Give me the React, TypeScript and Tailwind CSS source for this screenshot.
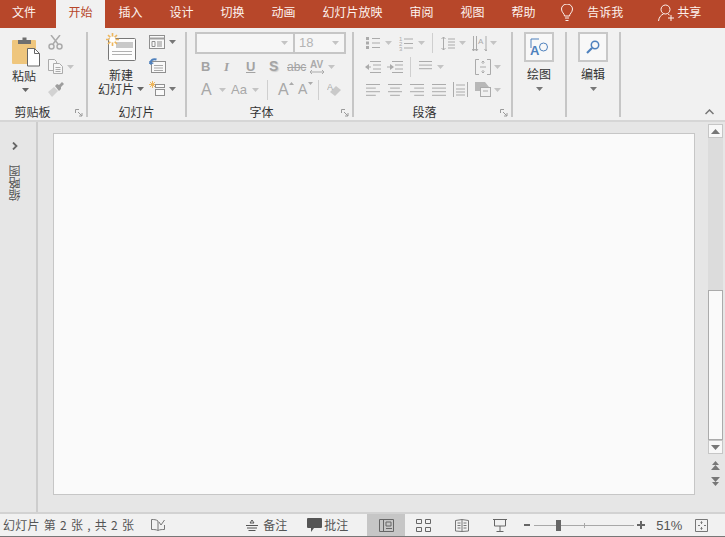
import type { ReactNode } from "react";

const GREY = "#ababab";
const BLUE = "#4f81bd";

function Caret({ className = "", color = "#a8a8a8" }: { className?: string; color?: string }) {
  return (
    <svg width="7" height="4" viewBox="0 0 7 4" className={"shrink-0 " + className}>
      <path d="M0 0h7L3.500 4z" fill={color} />
    </svg>
  );
}

function Launcher({ className = "" }: { className?: string }) {
  return (
    <svg width="8" height="8" viewBox="0 0 8 8" className={"shrink-0 " + className} fill="none" stroke="#9a9a9a">
      <path d="M.5 4V.5H4" />
      <path d="M3 3l4 4M7 4v3H4" />
    </svg>
  );
}

function Lines({ w = 14, rows = [1, 1, 1, 1], align = "left" }: { w?: number; rows?: number[]; align?: "left" | "center" | "right" }) {
  return (
    <svg width={w} height="12" viewBox={`0 0 ${w} 12`} fill="none" stroke={GREY} className="shrink-0">
      {rows.map((r, i) => {
        const len = w * r;
        const x = align === "left" ? 0 : align === "right" ? w - len : (w - len) / 2;
        return <path key={i} d={`M${x} ${i * 3.6 + 0.5}h${len}`} />;
      })}
    </svg>
  );
}

function PasteIcon() {
  return (
    <svg width="29" height="31" viewBox="0 0 29 31" className="shrink-0">
      <rect x="0" y="4" width="24" height="24" rx="1" fill="#efc67d" />
      <path d="M6 8V4h4.500V1.500h4V4H19v4z" fill="#6f6f6f" />
      <path d="M15.500 12.500h7l5 5v12.500h-12z" fill="#fff" stroke="#666" />
      <path d="M22.500 12.500v5h5" fill="none" stroke="#666" />
    </svg>
  );
}

function NewSlideIcon() {
  return (
    <svg width="30" height="29" viewBox="0 0 30 29" className="shrink-0">
      <rect x="2.500" y="5.500" width="27" height="22" rx="1" fill="#fdfdfd" stroke="#777" />
      <rect x="10" y="9" width="17" height="6" fill="#c9c9c9" />
      <path d="M6 18.500h20M6 21.500h20" stroke="#b0b0b0" />
      <g stroke="#eeb65c" strokeWidth="1.600">
        <path d="M6.500 0v13M0 6.500h13M2 2l9 9M11 2l-9 9" />
      </g>
      <circle cx="6.500" cy="6.500" r="3" fill="#fff" />
    </svg>
  );
}

function Row({ children, className = "" }: { children: ReactNode; className?: string }) {
  return <div className={"flex items-center h-[23px] " + className}>{children}</div>;
}

function Group({ w, label, labelClass = "", launcher, children }: { w: string; label?: string; labelClass?: string; launcher?: boolean; children: ReactNode }) {
  return (
    <div className={"relative flex flex-col shrink-0 h-[85px] border-r-2 border-[#c6c6c6] " + w}>
      <div className="flex-1 min-h-0">{children}</div>
      {label && <div className={"text-center text-[12px] leading-[14px] -mb-[2px] text-[#333] " + labelClass}>{label}</div>}
      {launcher && <Launcher className="absolute right-[3px] bottom-0" />}
    </div>
  );
}

function BigButton({ label, icon }: { label: string; icon: ReactNode }) {
  return (
    <div className="flex flex-col items-center w-[30px] ml-[11px]">
      <div className="w-[30px] h-[30px] shrink-0 border-2 border-[#c8c8c8] bg-[#f8f8f8] flex items-center justify-center">{icon}</div>
      <div className="mt-[4px] text-[12px] leading-[16px] text-[#333] whitespace-nowrap">{label}</div>
      <Caret className="mt-[5px]" color="#777" />
    </div>
  );
}

const tabs = ["插入", "设计", "切换", "动画", "幻灯片放映", "审阅", "视图", "帮助"];
const SANS = { fontFamily: '"Liberation Sans", sans-serif' };

export default function App() {
  return (
    <div
      className="w-[725px] h-[537px] overflow-hidden flex flex-col bg-[#f1f1f1] text-[#444]"
      style={{ fontFamily: '"Noto Sans CJK SC", "Liberation Sans", sans-serif' }}
    >
      {/* tab bar */}
      <div className="h-[28px] shrink-0 bg-[#b7472a] flex text-[12px] leading-[24px] text-[#fdf3ef]">
        <div className="w-[56px] pl-[12px]">文件</div>
        <div className="w-[49px] text-center bg-[#f1f1f1] text-[#b7472a]">开始</div>
        {tabs.map((t) => (
          <div key={t} className="px-[13.500px]">
            {t}
          </div>
        ))}
        <svg width="14" height="18" viewBox="0 0 14 18" fill="none" stroke="#fdf3ef" className="ml-[11px] mt-[4px] shrink-0">
          <path d="M4.500 12c0-2.500-3-3.500-3-7a5.500 5 0 0 1 11 0c0 3.500-3 4.500-3 7z" />
          <path d="M5 14h4M5.500 16.500h3" />
        </svg>
        <div className="ml-[13px]">告诉我</div>
        <svg width="17" height="18" viewBox="0 0 17 18" fill="none" stroke="#fdf3ef" className="ml-[35px] mt-[4px] shrink-0">
          <circle cx="7.500" cy="5.500" r="4.500" />
          <path d="M.5 17c.5-4 2.500-6 5-7M10 10l1.500 1M13 11v6M10 14h6" />
        </svg>
        <div className="ml-[2px]">共享</div>
      </div>

      {/* ribbon */}
      <div className="relative h-[94px] shrink-0 pt-[4px] flex border-b-2 border-[#d6d6d6]">
        <Group w="w-[88px]" label="剪贴板" labelClass="pr-[21px]" launcher>
          <div className="flex">
            <div className="ml-[12px] w-[28px] flex flex-col items-start">
              <div className="mt-[4px]"><PasteIcon /></div>
              <div className="mt-[1px] text-[12px] leading-[16px] text-[#333]">粘贴</div>
              <Caret className="mt-[4px] ml-[10px]" color="#666" />
            </div>
            <div className="ml-[8px] flex flex-col">
              <svg width="15" height="15" viewBox="0 0 15 15" fill="none" stroke={GREY} strokeWidth="1.500" className="mt-[3px]">
                <path d="M3 0l7 9M12 0L5 9" />
                <circle cx="3.500" cy="11.500" r="2.500" />
                <circle cx="11.500" cy="11.500" r="2.500" />
              </svg>
              <div className="mt-[9px] flex items-center">
                <svg width="15" height="15" viewBox="0 0 15 15" fill="#f6f6f6" stroke={GREY}>
                  <path d="M.5.5h6l2 2v9h-8z" />
                  <path d="M5.500 4.500h6l3 3v7h-9z" />
                  <path d="M7.500 8.500h5M7.500 10.500h5M7.500 12.500h5" />
                </svg>
                <Caret className="ml-[4px]" color="#c4c4c4" />
              </div>
              <svg width="16" height="15" viewBox="0 0 16 15" className="mt-[8px]">
                <path d="M0 10l6-5 4 4-6 6z" fill="#d2d2d2" />
                <path d="M7 4l2-2 2 1 3-3 2 2-3 3 0 2-2 2z" fill="#9d9d9d" />
              </svg>
            </div>
          </div>
        </Group>

        <Group w="w-[99px]" label="幻灯片">
          <div className="flex">
            <div className="ml-[10px] w-[48px] flex flex-col items-start">
              <div className="mt-[1px] ml-[8px]"><NewSlideIcon /></div>
              <div className="mt-[6px] ml-[11px] text-[12px] leading-[14px] text-[#333]">新建</div>
              <div className="flex items-center text-[12px] leading-[14px] text-[#333] whitespace-nowrap">
                幻灯片
                <Caret className="ml-[3px]" color="#666" />
              </div>
            </div>
            <div className="ml-[3px] flex flex-col">
              <div className="mt-[3px] flex items-center">
                <svg width="16" height="14" viewBox="0 0 16 14" fill="none" stroke="#8f8f8f">
                  <rect x=".5" y=".5" width="15" height="13" fill="#f9f9f9" />
                  <path d="M.5 3.500h15" stroke="#a0a0a0" strokeWidth="2" />
                  <path d="M3 6.500h3v5H3z M8 7h5M8 9h5M8 11h5" />
                </svg>
                <Caret className="ml-[4px]" color="#777" />
              </div>
              <svg width="17" height="15" viewBox="0 0 17 15" fill="none" className="mt-[9px]">
                <rect x="2.500" y="3.500" width="14" height="11" stroke="#8f8f8f" fill="#f9f9f9" />
                <path d="M5 7.500h9M5 10h9M5 12.500h9" stroke="#a8a8a8" />
                <path d="M7.500 1.500C4 .5 1.500 2 1 6" stroke={BLUE} strokeWidth="2" />
                <path d="M0 3l1.500 4L5 5z" fill={BLUE} />
              </svg>
              <div className="mt-[8px] flex items-center">
                <svg width="16" height="15" viewBox="0 0 16 15" fill="none">
                  <g stroke="#eeb65c"><path d="M3.500 0v7M0 3.500h7M1 1l5 5M6 1L1 6" /></g>
                  <rect x="6.500" y="3.500" width="9" height="3" stroke="#8f8f8f" fill="#f9f9f9" />
                  <rect x="6.500" y="8.500" width="9" height="6" stroke="#8f8f8f" fill="#f9f9f9" />
                </svg>
                <Caret className="ml-[4px]" color="#777" />
              </div>
            </div>
          </div>
        </Group>

        <Group w="w-[167px]" label="字体" labelClass="pr-[16px]" launcher>
          <div className="flex ml-[8px]">
            <div className="w-[100px] h-[22px] border-2 border-[#c6c6c6] bg-[#f6f6f6] flex items-center justify-end pr-[5px]"><Caret color="#c4c4c4" /></div>
            <div className="w-[51px] h-[22px] border-2 border-l-0 border-[#c6c6c6] bg-[#f6f6f6] flex items-center justify-between pl-[4px] pr-[5px] text-[13px] text-[#b4b4b4]" style={SANS}>18<Caret color="#c4c4c4" /></div>
          </div>
          <Row className="ml-[14px] text-[#a3a3a3] text-[13px] font-bold mt-[1px]">
            <span className="w-[23px]" style={SANS}>B</span>
            <span className="w-[22px] italic" style={{ fontFamily: '"Liberation Serif", serif' }}>I</span>
            <span className="w-[23px] underline" style={SANS}>U</span>
            <span className="w-[18px] text-[14px]" style={{ ...SANS, textShadow: "1px 1px 1px #ccc" }}>S</span>
            <span className="w-[22px] line-through font-normal text-[12px] text-[#a3a3a3]" style={SANS}>abc</span>
            <svg width="16" height="16" viewBox="0 0 16 16" className="shrink-0" fill="none" stroke={GREY}>
              <text x="1" y="9" fontSize="10" fill={GREY} stroke="none" fontFamily="Liberation Sans">AV</text>
              <path d="M1 13h14M3 11l-2 2 2 2M13 11l2 2-2 2" />
            </svg>
            <Caret className="ml-[3px]" color="#c4c4c4" />
          </Row>
          <Row className="ml-[14px] text-[#a8a8a8]">
            <span className="text-[16px] w-[17px] leading-none" style={SANS}>A</span>
            <Caret color="#c4c4c4" className="ml-[1px]" />
            <span className="text-[13px] ml-[5px] w-[21px]" style={SANS}>Aa</span>
            <Caret color="#c4c4c4" />
            <div className="ml-[8px] w-px h-[20px] bg-[#cfcfcf]" />
            <span className="text-[16px] ml-[10px] w-[11px]" style={SANS}>A</span>
            <svg width="5" height="3" viewBox="0 0 5 3" className="mb-[12px] shrink-0"><path d="M2.500 0L5 3H0z" fill={GREY} /></svg>
            <span className="text-[14px] ml-[4px] w-[10px]" style={SANS}>A</span>
            <svg width="5" height="3" viewBox="0 0 5 3" className="mb-[12px] shrink-0"><path d="M0 0h5L2.500 3z" fill={GREY} /></svg>
            <div className="ml-[5px] w-px h-[20px] bg-[#cfcfcf]" />
            <svg width="15" height="15" viewBox="0 0 15 15" className="ml-[8px] shrink-0">
              <path d="M9 4l5 4-6 6-5-4z" fill="#c9c9c9" />
              <text x="0" y="8" fontSize="9" fill={GREY} fontFamily="Liberation Sans">A</text>
            </svg>
          </Row>
        </Group>

        <Group w="w-[159px]" label="段落" labelClass="pr-[16px]" launcher>
          <Row className="ml-[12px] mt-[-1px] h-[24px]">
            <svg width="14" height="14" viewBox="0 0 14 14" fill="none" stroke={GREY} className="shrink-0">
              <path d="M6 2.500h8M6 7h8M6 11.500h8" />
              <path d="M0 2.500h3M0 7h3M0 11.500h3" strokeWidth="3" strokeDasharray="3 0" />
            </svg>
            <Caret className="ml-[5px]" color="#c4c4c4" />
            <svg width="14" height="15" viewBox="0 0 14 15" fill="none" stroke={GREY} className="ml-[7px] shrink-0">
              <text x="0" y="5" fontSize="6" fill={GREY} stroke="none" fontFamily="Liberation Sans">1</text>
              <text x="0" y="10" fontSize="6" fill={GREY} stroke="none" fontFamily="Liberation Sans">2</text>
              <text x="0" y="15" fontSize="6" fill={GREY} stroke="none" fontFamily="Liberation Sans">3</text>
              <path d="M5 3h9M5 7.500h9M5 12h9" />
            </svg>
            <Caret className="ml-[5px]" color="#c4c4c4" />
            <div className="ml-[7px] w-px h-[20px] bg-[#cfcfcf]" />
            <svg width="14" height="15" viewBox="0 0 14 15" fill="none" stroke={GREY} className="ml-[8px] shrink-0">
              <path d="M2.500 1v13M.5 3l2-2 2 2M.5 12l2 2 2-2M7 3h7M7 6h7M7 9h7M7 12h7" />
            </svg>
            <Caret className="ml-[4px]" color="#c4c4c4" />
            <svg width="15" height="15" viewBox="0 0 15 15" fill="none" stroke={GREY} className="ml-[6px] shrink-0">
              <path d="M1.500 0v15M4.500 0v15M14 0v15M0 13l1.500 2 1.500-2M3 13l1.500 2 1.500-2M12.500 13l1.500 2 1.500-2" />
              <text x="6" y="8" fontSize="8" fill={GREY} stroke="none" fontFamily="Liberation Sans">A</text>
            </svg>
            <Caret className="ml-[3px]" color="#c4c4c4" />
          </Row>
          <Row className="ml-[11px]">
            <svg width="16" height="12" viewBox="0 0 16 12" fill="none" stroke={GREY}>
              <path d="M5 .5h11M8 4h8M8 8h8M5 11.500h11M6 6H1" />
              <path d="M4 3L0 6l4 3z" fill={GREY} stroke="none" />
            </svg>
            <svg width="16" height="12" viewBox="0 0 16 12" fill="none" stroke={GREY} className="ml-[6px]">
              <path d="M5 .5h11M8 4h8M8 8h8M5 11.500h11M0 6h3" />
              <path d="M3 3l4 3-4 3z" fill={GREY} stroke="none" />
            </svg>
            <div className="ml-[7px] w-px h-[20px] bg-[#cfcfcf]" />
            <div className="ml-[8px]"><Lines w={13} rows={[1, 1, 1]} /></div>
            <Caret className="ml-[5px]" color="#c4c4c4" />
            <svg width="16" height="16" viewBox="0 0 16 16" fill="none" stroke={GREY} className="ml-[31px] shrink-0">
              <path d="M4 .5H.5v15H4M12 .5h3.500v15H12M8 2v3M6.500 3.500L8 2l1.500 1.500M8 14v-3M6.500 12.500L8 14l1.500-1.500M5 8h6" />
            </svg>
            <Caret className="ml-[3px]" color="#c4c4c4" />
          </Row>
          <Row className="ml-[12px]">
            <Lines w={14} rows={[1, 0.7, 1, 0.7]} />
            <div className="ml-[8px]"><Lines w={14} rows={[1, 0.7, 1, 0.7]} align="center" /></div>
            <div className="ml-[8px]"><Lines w={14} rows={[1, 0.7, 1, 0.7]} align="right" /></div>
            <div className="ml-[8px]"><Lines w={14} rows={[1, 1, 1, 1]} /></div>
            <svg width="15" height="15" viewBox="0 0 15 15" fill="none" stroke={GREY} className="ml-[7px] shrink-0">
              <path d="M.5 0v15M14.500 0v15M3 3h9M3 7h9M3 10h9M3 13h9" />
            </svg>
            <svg width="16" height="15" viewBox="0 0 16 15" fill="none" className="ml-[7px] shrink-0">
              <path d="M0 0h10l4 5H5v4H0z" fill="#b8b8b8" />
              <rect x="5.500" y="5.500" width="10" height="9" stroke={GREY} fill="#f1f1f1" />
              <path d="M8 9h5" stroke={GREY} />
            </svg>
            <Caret className="ml-[3px]" color="#c4c4c4" />
          </Row>
        </Group>

        <Group w="w-[54px]">
          <BigButton
            label="绘图"
            icon={
              <svg width="20" height="20" viewBox="0 0 20 20" fill="none">
                <path d="M10 2H2v9" stroke={BLUE} />
                <circle cx="14.500" cy="10" r="4" stroke={BLUE} />
                <text x="1" y="18" fontSize="13" fontWeight="700" fill={BLUE} fontFamily="Liberation Sans">A</text>
              </svg>
            }
          />
        </Group>
        <Group w="w-[54px]">
          <BigButton
            label="编辑"
            icon={
              <svg width="14" height="14" viewBox="0 0 14 14" fill="none" stroke={BLUE}>
                <circle cx="9" cy="5" r="3.700" strokeWidth="1.500" />
                <path d="M6 8l-5 5" strokeWidth="2.200" />
              </svg>
            }
          />
        </Group>
        <svg width="9" height="6" viewBox="0 0 9 6" fill="none" stroke="#777" strokeWidth="1.500" className="absolute right-[11px] bottom-[5px]">
          <path d="M.5 5l4-4 4 4" />
        </svg>
      </div>

      {/* work area */}
      <div className="flex-1 min-h-0 flex bg-[#e6e6e6] border-b-2 border-[#d2d2d2]">
        <div className="w-[38px] shrink-0 border-r-2 border-[#cdcdcd] flex flex-col items-center pr-[7px]">
          <svg width="6" height="8" viewBox="0 0 6 8" fill="none" stroke="#666" strokeWidth="1.800" className="mt-[20px]">
            <path d="M1 .5L4.500 4 1 7.500" />
          </svg>
          <div className="mt-[15px] text-[12px] leading-[12px] text-[#555] rotate-180 [writing-mode:vertical-rl]">缩略图</div>
        </div>
        <div className="flex-1 min-w-0 pl-[15px] pt-[11px]">
          <div className="w-[642px] h-[362px] bg-[#fafafa] border border-[#c6c6c6]" />
        </div>
        <div className="w-[15px] shrink-0 mr-[2px] mt-[2px] flex flex-col">
          <div className="h-[14px] border border-[#c6c6c6] bg-[#f8f8f8] flex items-center justify-center">
            <svg width="9" height="5" viewBox="0 0 9 5"><path d="M4.500 0L9 5H0z" fill="#777" /></svg>
          </div>
          <div className="h-[152px] bg-[#dcdcdc]" />
          <div className="h-[150px] border border-[#ababab] bg-[#fafafa]" />
          <div className="h-[14px] border border-[#c6c6c6] bg-[#f8f8f8] flex items-center justify-center">
            <svg width="9" height="5" viewBox="0 0 9 5"><path d="M0 0h9L4.500 5z" fill="#777" /></svg>
          </div>
          <svg width="9" height="9" viewBox="0 0 9 9" fill="#777" className="ml-[3px] mt-[7px]">
            <path d="M4.500 0L8 4H1zM4.500 4L9 9H0z" />
          </svg>
          <svg width="9" height="9" viewBox="0 0 9 9" fill="#777" className="ml-[3px] mt-[7px]">
            <path d="M0 0h9L4.500 5zM1 5h7L4.500 9z" />
          </svg>
        </div>
      </div>

      {/* status bar */}
      <div className="h-[23px] shrink-0 flex items-center border-b border-[#777] text-[12px] text-[#555] leading-none">
        <span className="ml-[3px] whitespace-nowrap tracking-[0.2px] [word-spacing:1.200px]">幻灯片 第 2 张 , 共 2 张</span>
        <svg width="14" height="12" viewBox="0 0 14 12" fill="none" stroke="#777" className="ml-[17px] shrink-0">
          <path d="M7 2C5 .5 3 .5.5.5v10c2.500 0 4.500 0 6.500 1 2-1 4-1 6.500-1V6M7 2v9M8 3l2 3 3.500-5" />
        </svg>
        <svg width="12" height="12" viewBox="0 0 12 12" fill="none" stroke="#555" className="ml-[81px] shrink-0">
          <path d="M6 1L4 4h4zM0 6.500h12M1 9h10M2.500 11.500h7" />
        </svg>
        <span className="ml-[5px]">备注</span>
        <svg width="15" height="14" viewBox="0 0 15 14" className="ml-[20px] shrink-0">
          <path d="M1 0h13a1 1 0 0 1 1 1v8a1 1 0 0 1-1 1H7l-3 4v-4H1a1 1 0 0 1-1-1V1a1 1 0 0 1 1-1z" fill="#555" />
        </svg>
        <span className="ml-[2px]">批注</span>
        <div className="ml-[19px] w-[38px] h-full bg-[#c6c6c6] flex items-center justify-center">
          <svg width="15" height="13" viewBox="0 0 15 13" fill="none" stroke="#666">
            <path d="M.5.5h14v12H.5zM4.500.5v12M7 3h5v4H7zM7 9.500h6" />
          </svg>
        </div>
        <svg width="15" height="13" viewBox="0 0 15 13" fill="none" stroke="#666" className="ml-[11px] shrink-0">
          <path d="M.5.5h5v4h-5zM9.500.5h5v4h-5zM.5 8.500h5v4h-5zM9.500 8.500h5v4h-5z" />
        </svg>
        <svg width="14" height="13" viewBox="0 0 14 13" fill="none" stroke="#777" className="ml-[24px] shrink-0">
          <path d="M.5 1.500L7 .5l6.500 1v10.500L7 12.500.5 12zM7 .5v12M2.500 4h3M2.500 6.500h3M2.500 9h3M8.500 4h3M8.500 6.500h3M8.500 9h3" />
        </svg>
        <svg width="14" height="13" viewBox="0 0 14 13" fill="none" stroke="#666" className="ml-[24px] shrink-0">
          <path d="M0 .5h14M1.500 1v6h11V1M7 7v5M3.500 12.500h7" />
        </svg>
        <div className="ml-[17px] w-[6px] h-[2px] bg-[#666]" />
        <div className="relative ml-[4px] w-[100px] h-px bg-[#a8a8a8]">
          <div className="absolute left-[22px] -top-[5px] w-[5px] h-[11px] bg-[#666]" />
          <div className="absolute left-[50px] -top-[2px] w-px h-[5px] bg-[#a8a8a8]" />
        </div>
        <svg width="8" height="8" viewBox="0 0 8 8" className="ml-[3px] shrink-0" fill="#666"><path d="M3 0h2v3h3v2H5v3H3V5H0V3h3z" /></svg>
        <span className="ml-[11px] text-[13px]" style={SANS}>51%</span>
        <svg width="13" height="13" viewBox="0 0 13 13" fill="none" stroke="#777" className="ml-[13px] shrink-0">
          <path d="M.5.5h12v12H.5zM6.500 3v2M5.500 3.500L6.500 2.500l1 1M6.500 10V8M5.500 9.500l1 1 1-1M3 6.500h2M9 6.500h2" />
        </svg>
      </div>
    </div>
  );
}
